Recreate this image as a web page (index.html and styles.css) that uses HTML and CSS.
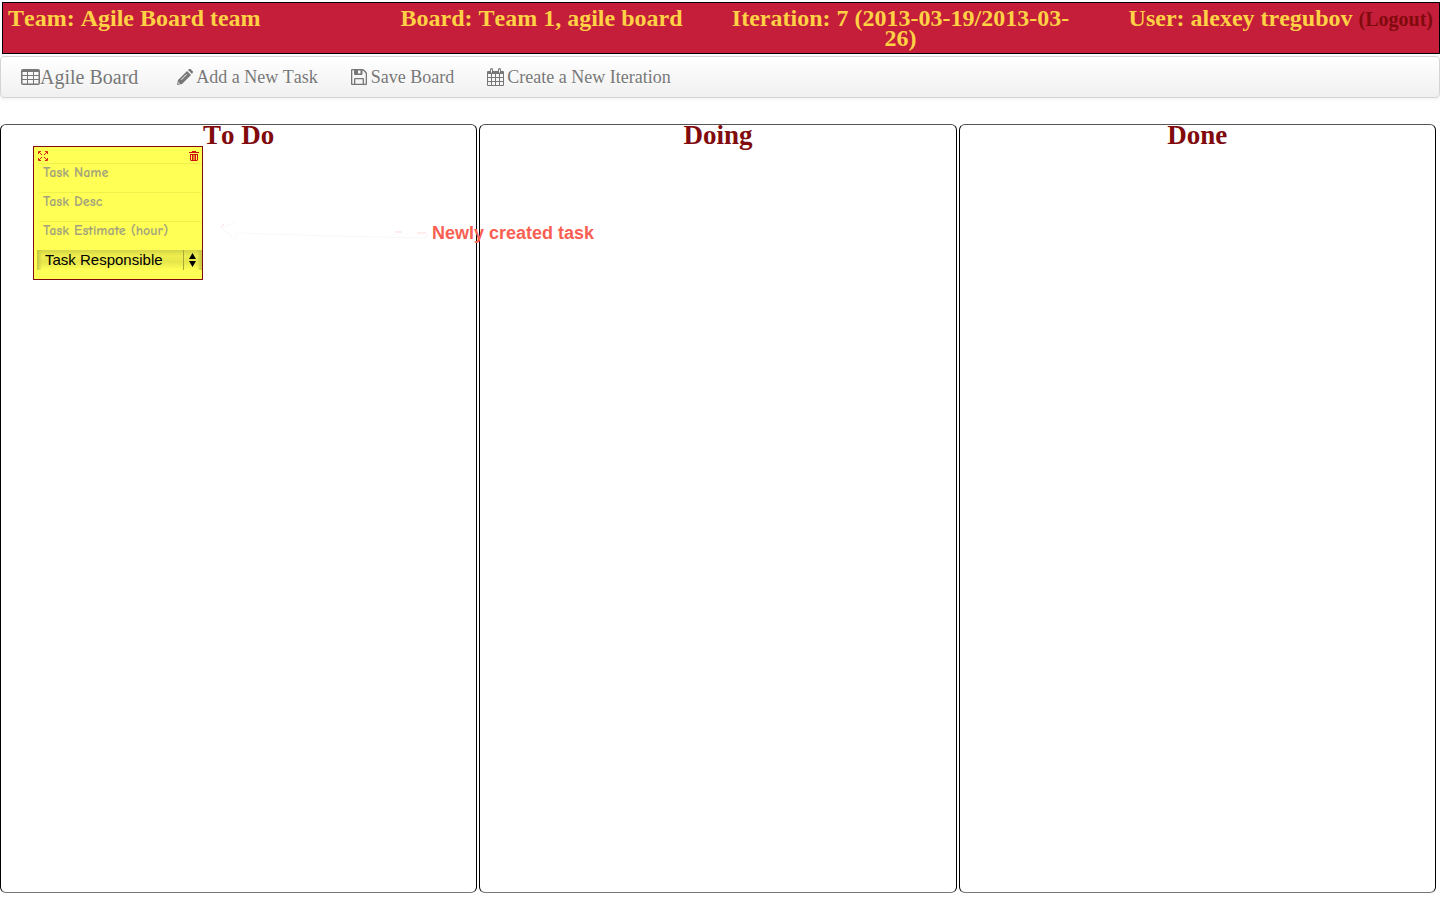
FILE: index.html
```html
<!DOCTYPE html>
<html lang="en">
<head>
<meta charset="utf-8">
<title>Agile Board</title>
<link rel="stylesheet" href="styles.css">
</head>
<body>
<header class="info">
  <div class="info-team">Team: Agile Board team</div>
  <div class="info-mid">Board: Team 1, agile board</div>
  <div class="info-mid">Iteration: 7 (2013-03-19/2013-03-26)</div>
  <div class="info-user">User: alexey tregubov <a class="logout" href="#">(Logout)</a></div>
</header>
<nav class="navbar">
  <a class="brand" href="#"><svg class="icon-table" viewBox="0 0 19 16" aria-hidden="true"><path fill-rule="evenodd" d="M2 0H17Q19 0 19 2V14Q19 16 17 16H2Q0 16 0 14V2Q0 0 2 0ZM1.500 3V6H6V3ZM7 3V6H12V3ZM13 3V6H17.500V3ZM1.500 7V10H6V7ZM7 7V10H12V7ZM13 7V10H17.500V7ZM1.500 11V14.500H6V11ZM7 11V14.500H12V11ZM13 11V14.500H17.500V11Z"/></svg>Agile Board</a>
  <a class="nav-link" href="#"><svg class="icon-pencil" viewBox="0 0 16 16" aria-hidden="true"><path fill-rule="evenodd" d="M1 11L10 2L14 6L5 15L0 16ZM1.500 13L1.200 14.800L3 14.500ZM4 10.500L9.500 5L10 5.500L4.500 11ZM11 1L12 0Q13 -.6 14 .5L15.500 2Q16.500 3 15.500 4L15 5Z"/></svg>Add a New Task</a>
  <a class="nav-link" href="#"><svg class="icon-save" viewBox="0 0 16 16" aria-hidden="true"><path fill-rule="evenodd" d="M1 0H11.500Q12.500 0 13 .6L15.400 3Q16 3.600 16 4.500V15Q16 16 15 16H1Q0 16 0 15V1Q0 0 1 0ZM1.300 1.300V14.700H3V10Q3 9 4 9H12Q13 9 13 10V14.700H14.700V4.500L12 1.500H11.500V5Q11.500 6 10.500 6H4Q3 6 3 5V1.300ZM7 1.500V4.500H9.500V1.500ZM4.300 10.300V14.700H11.700V10.300Z"/></svg>Save Board</a>
  <a class="nav-link" href="#"><svg class="icon-calendar" viewBox="0 0 17 18" aria-hidden="true"><path fill-rule="evenodd" d="M1 3H3V1.500Q3 0 4.500 0T6 1.500V3H11V1.500Q11 0 12.500 0T14 1.500V3H16Q17 3 17 4V17Q17 18 16 18H1Q0 18 0 17V4Q0 3 1 3ZM4 1.500V4.500H5V1.500ZM12 1.500V4.500H13V1.500ZM1 6V9H4V6ZM5 6V9H8V6ZM9 6V9H12V6ZM13 6V9H16V6ZM1 10V13H4V10ZM5 10V13H8V10ZM9 10V13H12V10ZM13 10V13H16V10ZM1 14V17H4V14ZM5 14V17H8V14ZM9 14V17H12V14ZM13 14V17H16V14Z"/></svg>Create a New Iteration</a>
</nav>
<main class="board">
  <section class="column">
    <h2 class="column-title">To Do</h2>
    <form class="note">
      <div class="note-tools">
        <button class="tool" type="button" aria-label="Expand"><svg class="tool-icon" viewBox="0 0 10 10" aria-hidden="true"><path d="M.5 3V.5H3M7 .5H9.500V3M9.500 7V9.500H7M3 9.500H.5V7M1 1L4 4M9 1L6 4M1 9L4 6M9 9L6 6" fill="none" stroke="#d01010" stroke-width=".9"/></svg></button>
        <button class="tool" type="button" aria-label="Delete"><svg class="tool-icon" viewBox="0 0 10 10" aria-hidden="true"><path fill-rule="evenodd" d="M3 0H7V1H10V2H0V1H3ZM1 3H9V9L8 10H2L1 9ZM2 4V9H3V4ZM4.500 4V9H5.500V4ZM7 4V9H8V4Z"/></svg></button>
      </div>
      <input class="field" type="text" placeholder="Task Name" aria-label="Task Name">
      <input class="field" type="text" placeholder="Task Desc" aria-label="Task Desc">
      <input class="field" type="text" placeholder="Task Estimate (hour)" aria-label="Task Estimate (hour)">
      <div class="picker">
        <select class="picker-select" aria-label="Task Responsible"><option>Task Responsible</option></select>
        <svg class="picker-arrows" viewBox="0 0 7 14" aria-hidden="true"><path d="M3.500 0L7 6H0ZM0 8H7L3.500 14Z"/></svg>
      </div>
    </form>
  </section>
  <section class="column"><h2 class="column-title">Doing</h2></section>
  <section class="column"><h2 class="column-title">Done</h2></section>
  <div class="callout">
    <svg class="callout-arrow" viewBox="0 0 207 18" aria-hidden="true"><path class="arrow-line" d="M1 6L14 0M17 11L14 17L1 6M17 11L110 14L205 16L206 12"/><path class="arrow-tip" d="M0 5L3 2M174 10H181M196 11H205"/></svg>
    <span>Newly created task</span>
  </div>
</main>
</body>
</html>
```

FILE: styles.css
```css
* { box-sizing: border-box; }

body {
  display: flex;
  flex-direction: column;
  min-height: 100vh;
  margin: 0;
  padding: 2px 0 7px;
  background: #fff;
  font-family: "Liberation Serif", "Times New Roman", serif;
  font-kerning: none;
}

.info {
  display: grid;
  grid-template-columns: repeat(4, 1fr);
  margin-left: 2px;
  padding: 5px 0;
  border: 1px solid #000;
  background: #c41e3a;
  color: #ffd145;
  font-size: 24px;
  font-weight: bold;
  line-height: 20px;
}
.info-team { padding-left: 5px; }
.info-mid { text-align: center; }
.info-user { padding-right: 6px; text-align: right; }
.logout { color: #800a0c; font-size: 20px; text-decoration: none; }

.navbar {
  display: flex;
  align-items: center;
  gap: 33px;
  height: 42px;
  margin-top: 2px;
  padding: 0 20px;
  border: 1px solid #d4d4d4;
  border-radius: 4px;
  background: linear-gradient(#fff, #f0f0f0);
  box-shadow: 0 1px 4px rgba(0, 0, 0, .07);
  font-size: 18px;
  line-height: 20px;
}
.brand, .nav-link {
  display: flex;
  align-items: center;
  color: #777;
  text-decoration: none;
  text-shadow: 0 1px 0 #fff;
}
.brand { margin-right: 6px; font-size: 20px; }
.navbar svg { fill: #777; }
.icon-table { width: 19px; height: 16px; }
.icon-pencil { width: 16px; height: 16px; margin-right: 3px; }
.icon-save { width: 16px; height: 16px; margin-right: 4px; }
.icon-calendar { width: 17px; height: 18px; margin-right: 3px; }

.board {
  position: relative;
  display: flex;
  flex: 1;
  gap: 2px;
  margin-top: 26px;
  padding-right: 4px;
}
.column {
  flex: 1;
  border: 1px solid #000;
  border-top-color: #555;
  border-bottom-color: #777;
  border-radius: 6px;
}
.column-title {
  margin: 0;
  color: #800a0c;
  font-size: 27px;
  line-height: 20px;
  text-align: center;
}

.note {
  width: 170px;
  margin: 1px 0 0 32px;
  padding: 4px 0 9px 3px;
  border: 1px solid #800a0c;
  background: #ffff55;
}
.note-tools {
  display: flex;
  justify-content: space-between;
  height: 12px;
  padding: 0 3px 0 1px;
}
.tool {
  display: flex;
  width: 10px;
  height: 10px;
  padding: 0;
  border: 0;
  background: none;
}
.tool-icon { width: 10px; height: 10px; fill: #d01010; }
.field {
  display: block;
  width: 100%;
  height: 29px;
  padding: 0 6px 11px;
  border: 0;
  border-top: 1px solid #f0f04c;
  border-radius: 4px;
  background: none;
  font: bold 14px "Comic Sans MS", "Comic Neue", "Open Sans", sans-serif;
}
.field::placeholder { color: #a3a37d; opacity: 1; }

.picker { position: relative; }
.picker-select {
  display: block;
  width: 100%;
  height: 20px;
  padding: 0 18px 2px 8px;
  border: 0;
  border-radius: 0;
  appearance: none;
  background:
    linear-gradient(#aaaa38, #aaaa38) right 18px top / 1px 100% no-repeat,
    linear-gradient(90deg, #c4c440, transparent 5px, transparent 160px, #c4c440),
    linear-gradient(#d4d446, #eeee4e 30%, #e6e64c 60%, #ffff55);
  color: #000;
  font: 15px "Liberation Sans", Arial, sans-serif;
}
.picker-arrows {
  position: absolute;
  top: 3px;
  right: 6px;
  width: 7px;
  height: 14px;
  pointer-events: none;
}

.callout {
  position: absolute;
  top: 98px;
  left: 221px;
  display: flex;
  gap: 4px;
  color: #f95f53;
  font: bold 18px/22px "Liberation Sans", Arial, sans-serif;
  white-space: nowrap;
  pointer-events: none;
}
.callout-arrow { width: 207px; height: 18px; fill: none; }
.arrow-line { stroke: #f8f8f8; }
.arrow-tip { stroke: #ffd9d6; }
```
